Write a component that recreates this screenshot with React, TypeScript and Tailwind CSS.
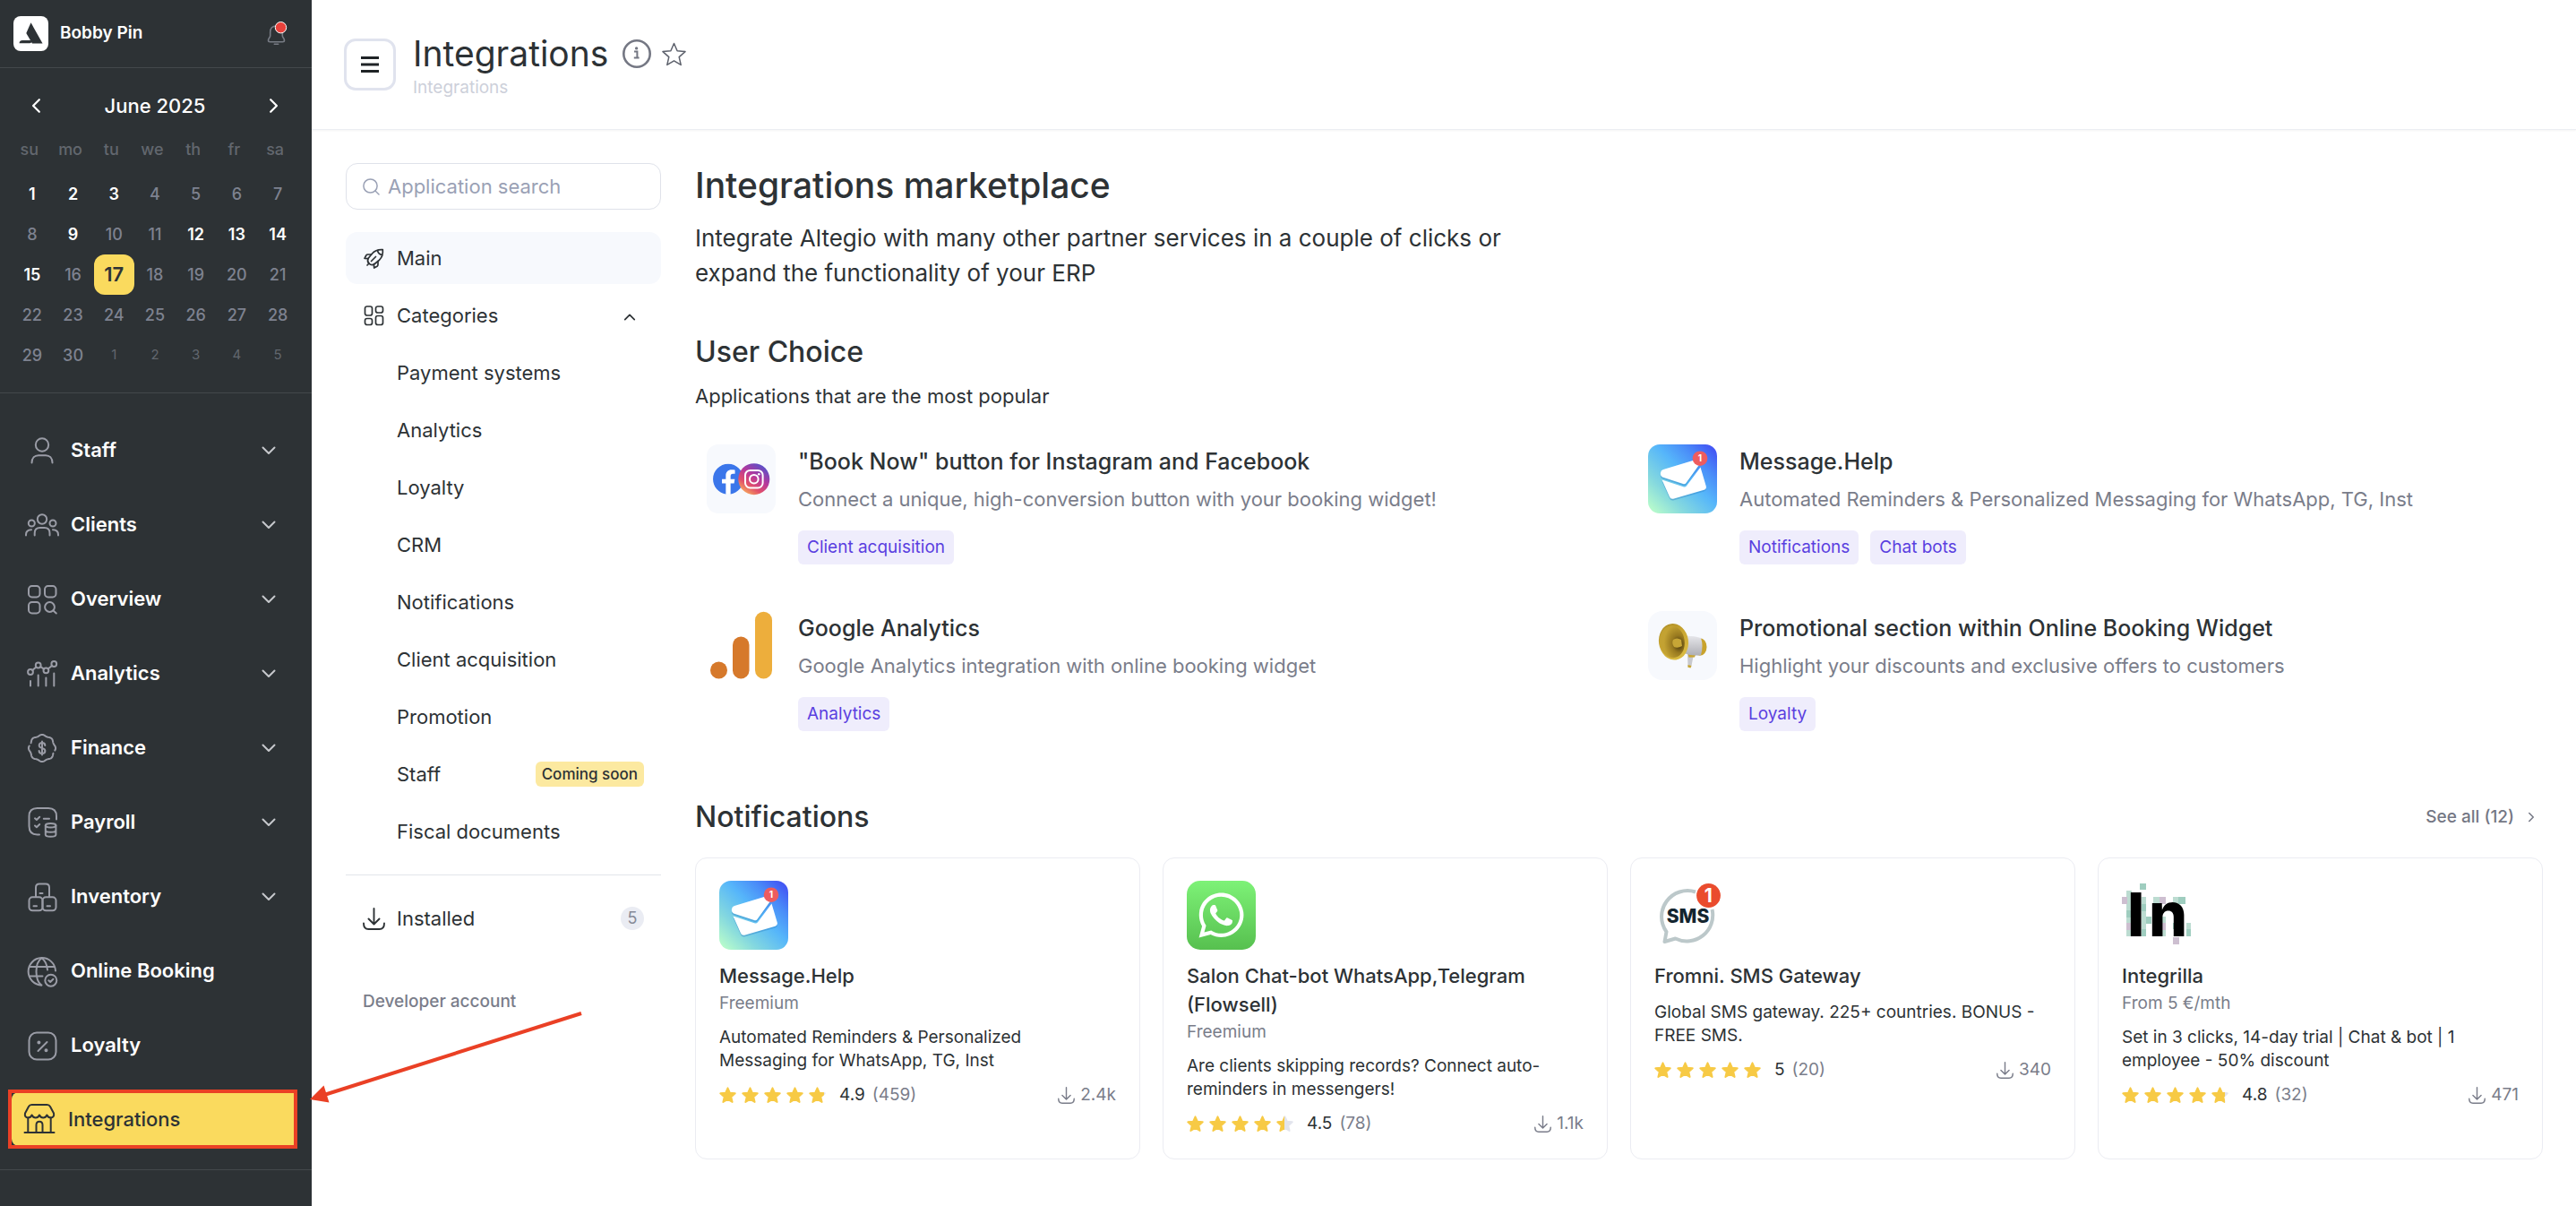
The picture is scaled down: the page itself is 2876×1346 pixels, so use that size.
import React, { useState } from "react";
import { FaFacebook, FaWhatsapp } from "react-icons/fa";

/* ---------- helpers ---------- */

function scallop(from: number, to: number) {
  const points: string[] = [];
  for (let a = from; a <= to; a += 3) {
    const t = (a * Math.PI) / 180;
    const r = 14.4 + 0.7 * Math.cos(8 * t);
    points.push(`${(19 + r * Math.cos(t)).toFixed(2)} ${(19 + r * Math.sin(t)).toFixed(2)}`);
  }
  return "M" + points.join("L");
}

function NavIcon({ children }: { children: React.ReactNode }) {
  return (
    <svg
      viewBox="0 0 38 38"
      className="size-[38px] shrink-0"
      fill="none"
      stroke="currentColor"
      strokeWidth="2"
      strokeLinecap="round"
      strokeLinejoin="round"
      aria-hidden="true"
    >
      {children}
    </svg>
  );
}

function Chevron({ d, className }: { d: string; className: string }) {
  return (
    <svg
      viewBox="0 0 16 16"
      className={className}
      fill="none"
      stroke="currentColor"
      strokeWidth="2"
      strokeLinecap="round"
      strokeLinejoin="round"
      aria-hidden="true"
    >
      <path d={d} />
    </svg>
  );
}

const DOWN = "M1.5 4.5 8 11l6.5-6.5";

/* ---------- sidebar ---------- */

const navItems = [
  {
    label: "Staff",
    expandable: true,
    icon: (
      <>
        <circle cx="19" cy="12.5" r="7.2" />
        <path d="M7.5 32.5c0-5 3-8.300 7.500-8.300h8c4.500 0 7.500 3.300 7.500 8.300" />
      </>
    ),
  },
  {
    label: "Clients",
    expandable: true,
    icon: (
      <>
        <circle cx="19" cy="12.500" r="5.200" />
        <circle cx="7.300" cy="17" r="3.500" />
        <circle cx="31" cy="17" r="3.500" />
        <path d="M10.700 30.600V28c0-4 2-6 6-6H21.500c4 0 6 2 6 6v2.600M1 30.600v-.8c0-3.500 2-5.500 6-5.500M37 30.600v-.8c0-3.500-2-5.500-6-5.500" />
      </>
    ),
  },
  {
    label: "Overview",
    expandable: true,
    icon: (
      <>
        <rect x="4" y="4" width="12.500" height="12.500" rx="3.700" />
        <rect x="22" y="4" width="12.500" height="12.500" rx="3.700" />
        <rect x="4" y="22" width="12.500" height="12.500" rx="3.700" />
        <circle cx="27.500" cy="27.500" r="5.400" />
        <path d="m31.500 31.500 3.300 3" />
      </>
    ),
  },
  {
    label: "Analytics",
    expandable: true,
    icon: (
      <>
        <circle cx="6" cy="17" r="2.900" />
        <circle cx="14.700" cy="9.500" r="2.900" />
        <circle cx="23.400" cy="15.300" r="2.900" />
        <circle cx="32.300" cy="8" r="2.900" />
        <path d="m8.300 15 4-3.500M17.200 11.200l3.800 2.500M25.700 13.500 30 10M6 27v5.500M14.700 20.500v12M23.400 23.500v9M32.300 18.500v14" />
      </>
    ),
  },
  {
    label: "Finance",
    expandable: true,
    icon: (
      <>
        <path d={scallop(25, 190)} />
        <path d={scallop(205, 370)} />
        <path d="M22.300 16c0-1.900-1.300-2.900-3.300-2.900s-3.300 1-3.300 2.800c0 1.900 1.500 2.500 3.300 3 1.900.500 3.400 1.200 3.400 3.100 0 1.900-1.400 2.900-3.400 2.900s-3.400-1-3.400-2.900M19 11.500v15" />
      </>
    ),
  },
  {
    label: "Payroll",
    expandable: true,
    icon: (
      <>
        <path d="M35 15.500V12c0-6-3.200-9-9-9H13.500c-6 0-9 3-9 9v11c0 6.500 3 9.500 9 9.500H16" />
        <path d="m11 14.300 1.900 1.700 3.300-3.200M11 22.500l1.900 1.700 3.300-3.200M20.800 14.700H27" />
        <ellipse cx="28.600" cy="22.200" rx="5.800" ry="2.300" />
        <path d="M22.800 22.200v10.300c0 1.300 2.600 2.300 5.800 2.300s5.800-1 5.800-2.300V22.200M22.800 27.400c0 1.300 2.600 2.300 5.800 2.300s5.800-1 5.800-2.300" />
      </>
    ),
  },
  {
    label: "Inventory",
    expandable: true,
    icon: (
      <>
        <path d="M12 19V8.500c0-2.500 1.500-4 4-4h7c2.500 0 4 1.500 4 4V19" />
        <rect x="4.500" y="19.300" width="15" height="15" rx="3.800" />
        <rect x="19.500" y="19.300" width="15" height="15" rx="3.800" />
        <path d="M16.500 15h3M9.500 29.300h3.500M24.500 29.300H28" />
      </>
    ),
  },
  {
    label: "Online Booking",
    expandable: false,
    icon: (
      <>
        <path d="M18.500 34.500A15.200 15.200 0 1 1 34 18.500" />
        <path d="M18 34.500c-3.500-3-5.500-8.500-5.500-15.200S14.500 7 18.500 4.200c4 2.800 6 7 6.500 13.300M5.500 14h27M5.500 24.500h14" />
        <circle cx="28.800" cy="29.200" r="6.500" />
        <path d="m26.300 29.300 1.900 1.700 3.200-3.200" />
      </>
    ),
  },
  {
    label: "Loyalty",
    expandable: false,
    icon: (
      <>
        <rect x="4.500" y="4.500" width="30" height="30" rx="8.500" />
        <path d="m24.500 15-10 10" />
        <circle cx="15.400" cy="15.600" r="1" fill="currentColor" />
        <circle cx="23.500" cy="24.200" r="1" fill="currentColor" />
      </>
    ),
  },
];

const weekdays = ["su", "mo", "tu", "we", "th", "fr", "sa"];
const weeks = [
  [1, 2, 3, 4, 5, 6, 7],
  [8, 9, 10, 11, 12, 13, 14],
  [15, 16, 17, 18, 19, 20, 21],
  [22, 23, 24, 25, 26, 27, 28],
  [29, 30, 31, 32, 33, 34, 35],
];
const bright = [1, 2, 3, 9, 12, 13, 14, 15];

function dayClass(day: number) {
  if (day === 17) return "rounded-xl bg-[#fada5e] text-[22px] font-semibold text-[#2d3235]";
  if (day > 30) return "text-[15px] text-[#62676e]";
  if (bright.includes(day)) return "text-lg font-semibold text-white";
  return "text-lg font-medium text-[#7e8290]";
}

function Calendar() {
  return (
    <section className="border-b border-[#43484b] pt-5 pr-[15px] pb-[19px] pl-[13px]">
      <div className="flex h-11 items-center justify-between px-[19px] text-white">
        <button type="button" aria-label="Previous month">
          <Chevron d="M10.500 2 4.500 8l6 6" className="size-[18px]" />
        </button>
        <h2 className="text-[22px] font-medium">June 2025</h2>
        <button type="button" aria-label="Next month">
          <Chevron d="M5.500 2l6 6-6 6" className="size-[18px]" />
        </button>
      </div>
      <table className="w-full table-fixed border-collapse">
        <thead>
          <tr className="h-[54px]">
            {weekdays.map((d) => (
              <th key={d} className="pr-1.5 text-center text-lg font-medium text-[#62676e]">
                {d}
              </th>
            ))}
          </tr>
        </thead>
        <tbody>
          {weeks.map((week) => (
            <tr key={week[0]}>
              {week.map((day) => (
                <td key={day} className="p-0">
                  <button
                    type="button"
                    className={`mx-auto flex size-[45px] items-center justify-center ${dayClass(day)}`}
                  >
                    {day > 30 ? day - 30 : day}
                  </button>
                </td>
              ))}
            </tr>
          ))}
        </tbody>
      </table>
    </section>
  );
}

function Sidebar() {
  return (
    <aside className="relative z-10 flex w-[348px] shrink-0 flex-col bg-[#2d3235]">
      <div className="flex h-[76px] items-center border-b border-[#43484b] pr-[26px] pl-[15px]">
        <span className="flex size-[39px] items-center justify-center rounded-lg bg-white">
          <svg viewBox="0 0 39 39" className="size-[39px]" fill="#2d3235" aria-hidden="true">
            <path d="M19.500 7.300 32.500 30.500H21L14.300 19z" />
            <path d="M6.500 30.300c.3-2.300 1.500-3.300 3.500-3.300h9.500l1.200 2c-1.200 1-2 1.300-3.500 1.300z" />
          </svg>
        </span>
        <span className="ml-[13px] flex-1 text-[19px] font-semibold text-white">Bobby Pin</span>
        <button type="button" aria-label="Notifications">
          <svg viewBox="0 0 26 30" className="h-[30px] w-[26px]" fill="none" aria-hidden="true">
            <path
              d="M12.500 6c-4.500 0-6.800 3-6.800 7v4c0 1.700-2.200 3-2.200 5 0 1.100.8 1.700 2 1.700h14c1.200 0 2-.6 2-1.700 0-2-2.200-3.300-2.200-5v-3M10.300 26.200h4.400"
              stroke="#777b84"
              strokeWidth="1.600"
              strokeLinecap="round"
            />
            <circle cx="17.500" cy="7.700" r="6.200" fill="#e8413b" stroke="#fff" strokeWidth="1" />
          </svg>
        </button>
      </div>
      <Calendar />
      <nav className="border-b border-[#43484b] pt-[22px] pb-[14px]">
        <ul>
          {navItems.map((item) => (
            <li key={item.label}>
              <button
                type="button"
                className="flex h-[83px] w-full items-center pr-10 pl-7 text-[#9a9ca6]"
              >
                <NavIcon>{item.icon}</NavIcon>
                <span className="ml-[13px] flex-1 text-left text-[22px] font-semibold text-white">
                  {item.label}
                </span>
                {item.expandable && <Chevron d={DOWN} className="size-4 text-[#c6c8cc]" />}
              </button>
            </li>
          ))}
          <li className="relative flex h-[83px] items-start pt-[11px] pr-4 pl-[13px]">
            <a
              href="#integrations"
              className="flex h-[60px] flex-1 items-center rounded-lg bg-[#fada5e] pl-3 text-[#2d3235]"
            >
              <NavIcon>
                <path d="M10.500 3h17c1.800 0 2.700.5 3.500 2l4 7.500c.8 3-1 5-3.300 5-2 0-3.500-1.200-4.300-3-.8 1.800-2.200 3-4.200 3s-3.400-1.200-4.200-3c-.8 1.800-2.200 3-4.200 3s-3.400-1.200-4.200-3c-.8 1.800-2.200 3-4.300 3-2.500 0-4-2-3.300-5L7 5c.8-1.500 1.700-2 3.500-2z" />
                <path d="M6.300 17.500v16M31.700 17.500v16M2.500 34h33M15.500 34v-8.500c0-5 7-5 7 0V34" />
              </NavIcon>
              <span className="ml-[13px] text-[22px] font-medium">Integrations</span>
            </a>
            <span className="pointer-events-none absolute top-2 right-4 bottom-[9px] left-[9px] border-4 border-[#ea4025]" />
            <svg
              viewBox="0 0 304 104"
              className="pointer-events-none absolute bottom-[59px] left-[346px] h-[104px] w-[304px]"
              aria-hidden="true"
            >
              <path d="M16 94 303 3" stroke="#ea4025" strokeWidth="4" />
              <path d="m0 99 15.500-15.500 6 19z" fill="#ea4025" />
            </svg>
          </li>
        </ul>
      </nav>
    </aside>
  );
}

/* ---------- header ---------- */

function PageHeader() {
  return (
    <header className="flex items-start border-b border-[#eceef2] pt-[38px] pr-9 pb-[33px] pl-9 shadow-xs">
      <button
        type="button"
        aria-label="Menu"
        className="mt-[5px] flex size-[58px] items-center justify-center rounded-[13px] border-3 border-[#e0e3ee]"
      >
        <svg viewBox="0 0 20 18" className="h-[18px] w-5" stroke="#1f2326" strokeWidth="3" aria-hidden="true">
          <path d="M0 1.500h20M0 9h20M0 16.500h20" />
        </svg>
      </button>
      <div className="ml-[19px]">
        <div className="flex h-11 items-center">
          <h1 className="text-[39px] leading-[44px]">Integrations</h1>
          <button type="button" aria-label="About this page" className="ml-4">
            <svg viewBox="0 0 32 32" className="size-8" aria-hidden="true">
              <circle cx="16" cy="16" r="14.700" fill="none" stroke="#747783" strokeWidth="2.600" />
              <circle cx="15.600" cy="9.900" r="1.700" fill="#747783" />
              <path
                d="M13 13.500h3.400v7M12.800 20.500h5.800"
                fill="none"
                stroke="#747783"
                strokeWidth="2"
              />
            </svg>
          </button>
          <button type="button" aria-label="Add to favorites" className="ml-3">
            <svg viewBox="0 0 27 27" className="size-[27px]" aria-hidden="true">
              <path
                d="m13.500 1.500 3.600 8.300 8.900.8-6.800 6 2 8.800-7.700-4.600-7.700 4.600 2-8.800-6.800-6 8.900-.8z"
                fill="none"
                stroke="#5d616c"
                strokeWidth="1.500"
                strokeLinejoin="round"
              />
            </svg>
          </button>
        </div>
        <p className="mt-[3px] text-[19px] leading-[26px] text-[#cdd0da]">Integrations</p>
      </div>
    </header>
  );
}

/* ---------- categories menu ---------- */

const categories = [
  "Payment systems",
  "Analytics",
  "Loyalty",
  "CRM",
  "Notifications",
  "Client acquisition",
  "Promotion",
  "Staff",
  "Fiscal documents",
];

function DownloadIcon({ className }: { className: string }) {
  return (
    <svg
      viewBox="0 0 25 25"
      className={className}
      fill="none"
      stroke="currentColor"
      strokeWidth="1.900"
      strokeLinecap="round"
      strokeLinejoin="round"
      aria-hidden="true"
    >
      <path d="M12.500 1v17M6.500 12.500l6 6 6-6M1 17.500c0 4.500 1.500 6.500 5.500 6.500h12c4 0 5.500-2 5.500-6.500" />
    </svg>
  );
}

function CategoryMenu() {
  const [open, setOpen] = useState(true);
  return (
    <aside className="w-[352px] shrink-0 text-[22px]">
      <label className="flex h-[52px] items-center rounded-[13px] border border-[#dfe2ea] pr-4 pl-[18px]">
        <svg viewBox="0 0 19 19" className="size-[19px] shrink-0" fill="none" stroke="#9aa1b5" strokeWidth="1.500" strokeLinecap="round" aria-hidden="true">
          <circle cx="8.500" cy="8.500" r="7.600" />
          <path d="m14 14 4 4" />
        </svg>
        <input
          type="search"
          aria-label="Application search"
          placeholder="Application search"
          className="ml-[9px] w-full min-w-0 bg-transparent outline-none placeholder:text-[#9aa1b5]"
        />
      </label>
      <ul className="mt-[25px] flex flex-col gap-1.5">
        <li>
          <a href="#main" className="flex h-[58px] items-center gap-[13px] rounded-[13px] bg-[#f7f9fd] px-[19px]">
            <svg viewBox="0 0 25 25" className="size-[25px]" fill="none" stroke="currentColor" strokeWidth="1.700" strokeLinejoin="round" strokeLinecap="round" aria-hidden="true">
              <path d="M22.300 2.700c-5-.4-8.800 1-11.800 4.300L6 12.500c-1 2.500-.5 4.300 1 5.700s3.300 2 5.700.8l5.500-4.500c3.300-3 4.600-6.800 4.100-11.800z" />
              <path d="M9.500 8H5.700c-.8 0-1.400.3-1.900 1L2 12.300l4.300.4M17 15.500v3.800c0 .8-.3 1.400-1 1.900L12.700 23l-.4-4.300M16.500 3.500c.5 2.500 2.400 4.500 5 5M14.500 10.500l-5 5M5 20l2-2" />
            </svg>
            Main
          </a>
        </li>
        <li>
          <button
            type="button"
            aria-expanded={open}
            onClick={() => setOpen(!open)}
            className="flex h-[58px] w-full items-center gap-[13px] px-[19px]"
          >
            <svg viewBox="0 0 25 25" className="size-[25px]" fill="none" stroke="currentColor" strokeWidth="1.700" aria-hidden="true">
              <rect x="2.500" y="2" width="8" height="10" rx="2.300" />
              <rect x="14.500" y="2" width="8" height="7" rx="2.300" />
              <rect x="2.500" y="15.500" width="8" height="7" rx="2.300" />
              <rect x="14.500" y="12.500" width="8" height="10" rx="2.300" />
            </svg>
            <span className="flex-1 text-left">Categories</span>
            <Chevron d="M2 11l6-6 6 6" className="mt-1 mr-[9px] size-3.5" />
          </button>
        </li>
        {open &&
          categories.map((name) => (
            <li key={name}>
              <a href="#category" className="flex h-[58px] items-center justify-between pr-[19px] pl-[57px]">
                {name}
                {name === "Staff" && (
                  <span className="rounded-md bg-[#fce9a0] px-[7px] text-[17px] leading-7 font-medium">
                    Coming soon
                  </span>
                )}
              </a>
            </li>
          ))}
      </ul>
      <hr className="mt-[19px] border-[#e2e5ea]" />
      <a href="#installed" className="mt-[19px] flex h-[58px] items-center gap-[13px] px-[19px]">
        <DownloadIcon className="size-[25px]" />
        <span className="flex-1">Installed</span>
        <span className="flex size-[26px] items-center justify-center rounded-full bg-[#eaecf3] text-lg text-[#868a97]">
          5
        </span>
      </a>
      <a
        href="#developer"
        className="mt-[51px] ml-[19px] block text-[19px] leading-[26px] font-medium text-[#7a7d8a]"
      >
        Developer account
      </a>
    </aside>
  );
}

/* ---------- application logos ---------- */

function MessageLogo({ id }: { id: string }) {
  return (
    <svg viewBox="0 0 77 77" className="size-[77px] shrink-0 rounded-[13px]" aria-hidden="true">
      <defs>
        <linearGradient id={id} x1="0" y1="1" x2="1" y2="0">
          <stop offset="0.02" stopColor="#bdffc9" />
          <stop offset="0.28" stopColor="#84d8df" />
          <stop offset="0.55" stopColor="#56b6fa" />
          <stop offset="0.75" stopColor="#4a8cf8" />
          <stop offset="0.95" stopColor="#4254f4" />
        </linearGradient>
      </defs>
      <rect width="77" height="77" fill={`url(#${id})`} />
      <g fill="#2f86c9" opacity="0.45" transform="translate(0 1.200)">
        <path d="M17 28.500 50 18.500q4-.8 5 2.300l1.700 3L42.500 43.500q-1.300 1.900-3.500 1L16 37q-2-.8-2.100-3.200v-1.600q.4-3 3.100-3.700z" />
        <path d="m15.500 40 24.500 8q1.800.5 3-1.200L58.500 26l6.300 21.200q.7 3-2.300 4.100L29 61q-4 1-5-2z" />
      </g>
      <g fill="#fff">
        <path d="M17 28 50 18q4-.8 5 2.300l1.700 3L42.500 43q-1.300 1.900-3.500 1L16 36.500q-2-.8-2.100-3.200v-1.600q.4-3 3.100-3.700z" />
        <path d="m15.500 39.500 24.500 8q1.800.5 3-1.200L58.500 25.500l6.300 21.200q.7 3-2.300 4.100L29 60.500q-4 1-5-2z" />
      </g>
      <circle cx="58" cy="15.700" r="8.300" fill="#ee5c5f" />
      <text x="58" y="19.200" textAnchor="middle" fontSize="10" fontWeight="700" fill="#fff">
        1
      </text>
    </svg>
  );
}

function BookNowLogo() {
  return (
    <div className="relative size-[77px] shrink-0 rounded-[13px] bg-[#f7f9fd]">
      <svg viewBox="0 0 77 77" className="size-[77px]" aria-hidden="true">
        <defs>
          <linearGradient id="insta" x1="0.150" y1="0.950" x2="0.750" y2="0.050">
            <stop offset="0" stopColor="#f9b25c" />
            <stop offset="0.300" stopColor="#e2506a" />
            <stop offset="0.600" stopColor="#b8379a" />
            <stop offset="1" stopColor="#5b4fc8" />
          </linearGradient>
        </defs>
        <circle cx="24" cy="38.700" r="16" fill="#fff" />
        <FaFacebook x={6.5} y={21.2} size={35} color="#3b76ea" />
        <circle cx="52.800" cy="38.700" r="17.500" fill="url(#insta)" />
        <g fill="none" stroke="#fff" strokeWidth="2">
          <rect x="43" y="28.900" width="19.600" height="19.600" rx="5.500" />
          <circle cx="52.800" cy="38.700" r="4.800" />
        </g>
        <circle cx="58.300" cy="33.200" r="1.300" fill="#fff" />
      </svg>
    </div>
  );
}

function AnalyticsLogo() {
  return (
    <svg viewBox="0 0 77 77" className="size-[77px] shrink-0" aria-hidden="true">
      <circle cx="13.500" cy="66" r="9.500" fill="#d6792b" />
      <rect x="29" y="28.500" width="18.500" height="47" rx="9.250" fill="#d6792b" />
      <rect x="54" y="0.700" width="19" height="74.800" rx="9.500" fill="#edae3c" />
    </svg>
  );
}

function MegaphoneLogo() {
  return (
    <svg viewBox="0 0 77 77" className="size-[77px] shrink-0 rounded-[16px] bg-[#f7f9fd]" aria-hidden="true">
      <defs>
        <linearGradient id="gold" x1="0" y1="0" x2="0.400" y2="1">
          <stop offset="0" stopColor="#a98a24" />
          <stop offset="0.500" stopColor="#c9a632" />
          <stop offset="1" stopColor="#d8b940" />
        </linearGradient>
        <radialGradient id="horn" cx="0.750" cy="0.600" r="0.600">
          <stop offset="0" stopColor="#3c2f0c" />
          <stop offset="0.450" stopColor="#98791f" />
          <stop offset="1" stopColor="#c3a232" />
        </radialGradient>
        <linearGradient id="shell" x1="0" y1="0" x2="0" y2="1">
          <stop offset="0" stopColor="#e6e6ea" />
          <stop offset="1" stopColor="#aeafb5" />
        </linearGradient>
      </defs>
      <path d="m44 46 7 2-2.500 13q-1.500 2.500-4 1.500z" fill="#c8c9ce" />
      <path d="m44.500 60 4 1-1 2.500-3-.7zM44.500 48l9-.5-1.500 4-6.500.3z" fill="#c9a632" />
      <ellipse cx="58" cy="40" rx="7.500" ry="9.800" fill="#c9a32c" />
      <path d="M38 28q12-1 21 2 3 9 0 19-10 2-21-3z" fill="url(#shell)" />
      <ellipse cx="28.500" cy="34.300" rx="16.500" ry="20.300" transform="rotate(-8 28.500 34.300)" fill="url(#gold)" />
      <ellipse cx="27" cy="34.300" rx="13.800" ry="18" transform="rotate(-8 27 34.300)" fill="url(#horn)" />
      <path d="M28 32q4-3 9 0l1 7q-5 3-9 1-3-4-1-8z" fill="#c7a636" />
    </svg>
  );
}

function WhatsAppLogo() {
  return (
    <div className="flex size-[77px] shrink-0 items-center justify-center rounded-[15px] bg-linear-to-b from-[#7df277] to-[#57c04f] text-white">
      <FaWhatsapp size={57} />
    </div>
  );
}

function SmsLogo() {
  return (
    <svg viewBox="0 0 77 77" className="size-[77px] shrink-0" aria-hidden="true">
      <path
        d="M46 12.500A29 29 0 0 0 13.500 57L11.500 68l12-3.500A29 29 0 0 0 64.500 32"
        fill="none"
        stroke="#bcc8ca"
        strokeWidth="4"
        strokeLinejoin="round"
      />
      <circle cx="60.500" cy="16.500" r="13.400" fill="#ea4c2e" />
      <text x="60.300" y="24" textAnchor="middle" fontSize="21" fontWeight="700" fill="#fff">
        1
      </text>
      <text x="37.500" y="46.500" textAnchor="middle" fontSize="21" fontWeight="800" fill="#14252f">
        SMS
      </text>
    </svg>
  );
}

const mint = [
  [20, 3, 7, 7], [22, 26, 5, 8], [27, 40, 6, 8], [22, 54, 5, 8], [63, 18, 8, 8], [57, 47, 5, 7], [72, 54, 5, 8], [5, 33, 6, 8],
];
const paleMint = [
  [5, 11, 6, 22], [22, 18, 5, 44], [5, 54, 6, 8], [35, 18, 8, 8], [43, 40, 6, 22], [72, 47, 5, 7], [57, 18, 6, 8], [5, 41, 6, 7],
];
const mauve = [
  [0, 18, 6, 8], [42, 18, 7, 8], [5, 47, 6, 8], [44, 47, 5, 8], [57, 63, 7, 8],
];

function IntegrillaLogo() {
  return (
    <svg viewBox="0 0 77 77" className="size-[77px] shrink-0 overflow-visible" aria-hidden="true">
      <g fill="#bcdcd1">
        {paleMint.map(([x, y, w, h]) => (
          <rect key={`${x}-${y}`} x={x} y={y} width={w} height={h} />
        ))}
      </g>
      <g fill="#9fcdbf">
        {mint.map(([x, y, w, h]) => (
          <rect key={`${x}-${y}`} x={x} y={y} width={w} height={h} />
        ))}
      </g>
      <g fill="#cdbfd0">
        {mauve.map(([x, y, w, h]) => (
          <rect key={`${x}-${y}`} x={x} y={y} width={w} height={h} />
        ))}
      </g>
      <text x="6 30" y="62" fontSize="68" fontWeight="800" fill="#000">
        In
      </text>
    </svg>
  );
}

/* ---------- marketplace ---------- */

const popular = [
  {
    title: '"Book Now" button for Instagram and Facebook',
    text: "Connect a unique, high-conversion button with your booking widget!",
    tags: ["Client acquisition"],
    logo: <BookNowLogo />,
  },
  {
    title: "Message.Help",
    text: "Automated Reminders & Personalized Messaging for WhatsApp, TG, Inst",
    tags: ["Notifications", "Chat bots"],
    logo: <MessageLogo id="mail-popular" />,
  },
  {
    title: "Google Analytics",
    text: "Google Analytics integration with online booking widget",
    tags: ["Analytics"],
    logo: <AnalyticsLogo />,
  },
  {
    title: "Promotional section within Online Booking Widget",
    text: "Highlight your discounts and exclusive offers to customers",
    tags: ["Loyalty"],
    logo: <MegaphoneLogo />,
  },
];

const apps = [
  {
    title: "Message.Help",
    price: "Freemium",
    text: "Automated Reminders & Personalized Messaging for WhatsApp, TG, Inst",
    rating: 4.9,
    votes: 459,
    installs: "2.4k",
    logo: <MessageLogo id="mail-card" />,
  },
  {
    title: "Salon Chat-bot WhatsApp,Telegram (Flowsell)",
    price: "Freemium",
    text: "Are clients skipping records? Connect auto-reminders in messengers!",
    rating: 4.5,
    votes: 78,
    installs: "1.1k",
    logo: <WhatsAppLogo />,
  },
  {
    title: "Fromni. SMS Gateway",
    price: "",
    text: "Global SMS gateway. 225+ countries. BONUS - FREE SMS.",
    rating: 5,
    votes: 20,
    installs: "340",
    logo: <SmsLogo />,
  },
  {
    title: "Integrilla",
    price: "From 5 €/mth",
    text: "Set in 3 clicks, 14-day trial | Chat & bot | 1 employee - 50% discount",
    rating: 4.8,
    votes: 32,
    installs: "471",
    logo: <IntegrillaLogo />,
  },
];

function Stars({ rating, id }: { rating: number; id: string }) {
  return (
    <span className="flex gap-1.5" role="img" aria-label={`${rating} out of 5`}>
      {[0, 1, 2, 3, 4].map((i) => {
        const part = Math.min(1, Math.max(0, rating - i));
        const fill = `stars-${id}-${i}`;
        return (
          <svg key={i} viewBox="0 0 20 20" className="size-[19px]" aria-hidden="true">
            <linearGradient id={fill} gradientUnits="userSpaceOnUse" x1="0" y1="0" x2="20" y2="0">
              <stop offset={part} stopColor="#f7ca45" />
              <stop offset={part} stopColor="#e2e4ed" />
            </linearGradient>
            <path
              d="m10 1.400 2.500 5.700 6.200.6-4.700 4.100 1.400 6.100L10 14.700l-5.400 3.200L6 11.800 1.300 7.700l6.200-.6z"
              fill={`url(#${fill})`}
              stroke={`url(#${fill})`}
              strokeWidth="2"
              strokeLinejoin="round"
            />
          </svg>
        );
      })}
    </span>
  );
}

function Marketplace() {
  return (
    <div className="min-w-0 flex-1">
      <h2 className="text-[39px] leading-[50px] font-medium">Integrations marketplace</h2>
      <p className="mt-[14px] max-w-[920px] text-[26px] leading-[39px]">
        Integrate Altegio with many other partner services in a couple of clicks or expand the
        functionality of your ERP
      </p>

      <section>
        <h3 className="mt-[49px] text-[32px] leading-10 font-medium">User Choice</h3>
        <p className="mt-[13px] text-[22px] leading-8">Applications that are the most popular</p>
        <div className="mt-[38px] grid grid-cols-2 gap-x-[39px] gap-y-[52px]">
          {popular.map((app) => (
            <article key={app.title} className="flex gap-[25px] px-[13px]">
              {app.logo}
              <div className="min-w-0">
                <h4 className="text-[25px] leading-[38px] font-medium">{app.title}</h4>
                <p className="mt-[7px] text-[22px] leading-8 text-[#7a7d8a]">{app.text}</p>
                <div className="mt-[19px] flex gap-[13px]">
                  {app.tags.map((tag) => (
                    <a
                      key={tag}
                      href="#tag"
                      className="rounded-md bg-[#efedfc] px-2.5 text-[19px] leading-[38px] text-[#5a3fe0]"
                    >
                      {tag}
                    </a>
                  ))}
                </div>
              </div>
            </article>
          ))}
        </div>
      </section>

      <section>
        <div className="mt-[76px] flex items-center justify-between">
          <h3 className="text-[32px] leading-10 font-medium">Notifications</h3>
          <a href="#all" className="flex items-center gap-[13px] pr-[7px] text-[19px] font-medium text-[#747784]">
            See all (12)
            <Chevron d="M5 2 11 8 5 14" className="size-3" />
          </a>
        </div>
        <div className="mt-[25px] grid grid-cols-4 gap-[25px]">
          {apps.map((app) => (
            <article key={app.title} className="rounded-[13px] border border-[#ebecf2] px-[26px] pt-[25px] pb-[26px]">
              {app.logo}
              <h4 className="mt-[13px] text-[22px] leading-8 font-medium">{app.title}</h4>
              {app.price && (
                <p className="mt-0.5 text-[19px] leading-[26px] text-[#7a7d8a]">{app.price}</p>
              )}
              <p className="mt-3 pr-2 text-[19px] leading-[26px]">{app.text}</p>
              <div className="mt-3 flex items-center text-[19px] leading-[26px] text-[#7a7d8a]">
                <Stars rating={app.rating} id={app.installs.replace(".", "")} />
                <span className="ml-[15px] text-[#2d3235]">{app.rating}</span>
                <span className="ml-2 flex-1">({app.votes})</span>
                <DownloadIcon className="mr-1.5 size-[19px]" />
                <span>{app.installs}</span>
              </div>
            </article>
          ))}
        </div>
      </section>
    </div>
  );
}

export default function App() {
  return (
    <div className="flex min-h-screen bg-white font-['Inter',sans-serif] text-[#2d3235]">
      <Sidebar />
      <main className="min-w-0 flex-1">
        <PageHeader />
        <div className="flex gap-[38px] pt-[37px] pr-[37px] pb-[50px] pl-[38px]">
          <CategoryMenu />
          <Marketplace />
        </div>
      </main>
    </div>
  );
}
